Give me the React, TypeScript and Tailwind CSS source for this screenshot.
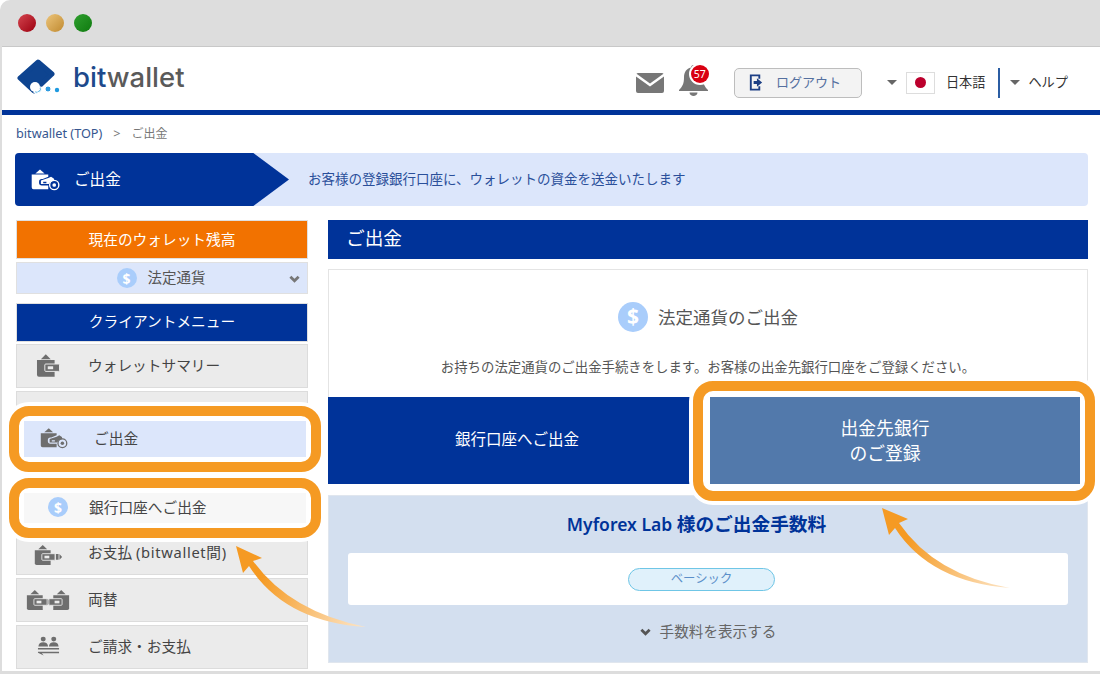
import type { ReactNode } from "react";

const FONT = "font-['Noto_Sans','Noto_Sans_CJK_JP',sans-serif]";

function Coin({ className }: { className: string }) {
  return (
    <span
      className={`inline-flex shrink-0 items-center justify-center rounded-full bg-[#a9cdfb] font-bold text-white ${className}`}
    >
      $
    </span>
  );
}

function Caret() {
  return (
    <span className="block h-0 w-0 border-x-[5px] border-t-[5px] border-x-transparent border-t-[#666]" />
  );
}

function Chevron({ className }: { className: string }) {
  return (
    <svg viewBox="0 0 12 8" className={className} fill="none" stroke="currentColor" strokeWidth="3">
      <path d="M1.500 1.500 6 6l4.500-4.500" />
    </svg>
  );
}

// solid wallet with a clasp band that sticks out to the right
function WalletShape({ x = 0 }: { x?: number }) {
  return (
    <g transform={`translate(${x} 0)`}>
      <path d="M5 6 10 1 15 6Z" />
      <path d="M1 7h18v17H3a2 2 0 0 1-2-2Z" />
      <rect x="9" y="11" width="15" height="7.500" rx="1" stroke="#ebebeb" strokeWidth="1" />
      <rect x="12" y="13.300" width="5.500" height="3" fill="#ebebeb" />
    </g>
  );
}

function WalletIcon() {
  return (
    <svg viewBox="0 0 24.500 25" className="h-[25px] w-[24px] fill-[#6e6e6e]">
      <WalletShape />
    </svg>
  );
}

function WithdrawIcon({ className }: { className: string }) {
  return (
    <svg viewBox="0 0 32 25" className={className}>
      <path d="M5 6 10 1.500 15 6Z" />
      <path d="M1 7h18v2.500L13 12h-1a3 3 0 0 0-3 3v1a3 3 0 0 0 3 3h7v4H3a2 2 0 0 1-2-2Z" />
      <path
        fillRule="evenodd"
        d="M11 13.500 19 11l3-1.500 3 2 .500 2-4 1.500-2 2.500H11Zm2.500 1.500v1.500h3.500V15Z"
      />
      <circle cx="25.500" cy="18.500" r="5" fill="none" stroke="currentColor" strokeWidth="1.500" />
      <circle cx="25.500" cy="18.500" r="2" />
    </svg>
  );
}

function TransferIcon() {
  return (
    <svg viewBox="0 0 32 25" className="h-[22px] w-[32px] fill-[#6e6e6e]">
      <WalletShape />
      <path d="M25 11.500h3v6.500h-3Zm4 0 3 3.200-3 3.300Z" />
    </svg>
  );
}

function ExchangeIcon() {
  return (
    <svg viewBox="0 0 50 25" className="h-[22px] w-[44px] fill-[#6e6e6e]">
      <WalletShape />
      <path d="M24.500 11l3 3.700-3 3.800Z" />
      <g transform="translate(50 0) scale(-1 1)">
        <WalletShape />
      </g>
    </svg>
  );
}

function BillingIcon() {
  return (
    <svg viewBox="0 0 24 21" className="h-[21px] w-[23px] fill-[#6e6e6e]">
      <circle cx="6.500" cy="2.800" r="2.600" />
      <path d="M1.500 10.500c0-3 2-4.500 5-4.500s5 1.500 5 4.500Z" />
      <circle cx="17.500" cy="2.800" r="2.600" />
      <path d="M12.500 10.500c0-3 2-4.500 5-4.500s5 1.500 5 4.500Z" />
      <path d="M1 12h22v1.500H1Zm0 4h22v1.500H5l2 2.500-6-3Z" />
    </svg>
  );
}

function MenuRow({ icon, children }: { icon: ReactNode; children: ReactNode }) {
  return (
    <div className="mb-[3px] flex h-[44px] items-center border border-[#dcdcdc] bg-[#ebebeb] pb-[1px] text-[14.7px] text-[#444]">
      <div className="flex w-[62px] justify-center">{icon}</div>
      <div className="pl-[9px]">{children}</div>
    </div>
  );
}

function Highlight({ className, children }: { className: string; children: ReactNode }) {
  return (
    <div
      className={`relative z-10 rounded-[20px] border-10 border-[#f59a23] bg-white ring-4 ring-white ${className}`}
    >
      {children}
    </div>
  );
}

function Sidebar() {
  return (
    <aside className="w-[292px] shrink-0">
      <div className="flex h-[39px] items-center justify-center border border-[#e0e0e0] bg-[#f27200] text-[14.7px] text-white">
        現在のウォレット残高
      </div>
      <div className="relative mt-[3px] flex h-[32px] items-center justify-center gap-[11px] border border-[#e0e0e0] bg-[#dce6fb] pr-[2px] text-[14.5px] text-[#555]">
        <Coin className="h-[20px] w-[20px] text-[14px]" />
        法定通貨
        <Chevron className="absolute right-[7px] top-[12px] h-[8px] w-[11px] text-[#777]" />
      </div>
      <div className="mt-[9px] flex h-[39px] items-center justify-center border border-[#e0e0e0] bg-[#003399] pb-[2px] text-[14.7px] text-white">
        クライアントメニュー
      </div>
      <div className="mt-[2px]">
        <MenuRow icon={<WalletIcon />}>ウォレットサマリー</MenuRow>
      </div>
      <div className="h-[15px] border border-b-0 border-[#dcdcdc] bg-[#ebebeb]" />
      <Highlight className="-mx-[7px] h-[66px] w-[312px] p-[5px]">
        <div className="flex h-[36px] items-center bg-[#dce6fb] pb-[2px] text-[14.7px] text-[#444]">
          <WithdrawIcon className="ml-[15px] h-[22px] w-[30px] fill-[#6e6e6e] text-[#6e6e6e]" />
          <span className="ml-[25px]">ご出金</span>
        </div>
      </Highlight>
      <Highlight className="-mx-[7px] mt-[6px] h-[60px] w-[312px] p-[5px]">
        <div className="flex h-[30px] items-center bg-[#f7f7f7] pb-[2px] text-[14.7px] text-[#444]">
          <Coin className="ml-[24px] h-[20px] w-[20px] text-[14px]" />
          <span className="ml-[21px]">銀行口座へご出金</span>
        </div>
      </Highlight>
      <div className="flex h-[37px] items-start border border-t-0 border-[#dcdcdc] bg-[#ebebeb] pt-[3px] text-[14.7px] text-[#444]">
        <div className="flex w-[62px] justify-center pt-[3px]">
          <TransferIcon />
        </div>
        <div className="pl-[9px]">
          お支払 <span className="tracking-[0.7px]">(bitwallet間)</span>
        </div>
      </div>
      <div className="mt-[3px]">
        <MenuRow icon={<ExchangeIcon />}>両替</MenuRow>
        <MenuRow icon={<BillingIcon />}>ご請求・お支払</MenuRow>
      </div>
    </aside>
  );
}

function MainPanel() {
  return (
    <main className="min-w-0 flex-1">
      <div className="flex h-[39px] items-center bg-[#003399] pb-[2px] pl-[18px] text-[18.7px] text-white">
        ご出金
      </div>
      <section className="mt-[10px] h-[128px] border-x border-t border-[#e4e4e4] bg-white">
        <div className="flex items-center justify-center gap-[10px] pt-[32px]">
          <Coin className="h-[30px] w-[30px] text-[21px]" />
          <span className="text-[17.5px] text-[#555]">法定通貨のご出金</span>
        </div>
        <p className="mt-[25px] text-center text-[13.4px] leading-[20px] text-[#555]">
          お持ちの法定通貨のご出金手続きをします。お客様の出金先銀行口座をご登録ください。
        </p>
      </section>
      <div className="flex h-[87px]">
        <button className="h-[87px] w-[362px] shrink-0 bg-[#003399] pb-[2px] pl-[16px] text-[15.5px] text-white">
          銀行口座へご出金
        </button>
        <Highlight className="ml-[3px] -mt-[16px] h-[120px] w-[402px] shrink-0 pb-[7px] pl-[7px] pr-[5px] pt-[6px]">
          <button className="h-[87px] w-[370px] bg-[#5279ab] pr-[20px] text-[17.8px] leading-[25px] text-white">
            出金先銀行
            <br />
            のご登録
          </button>
        </Highlight>
      </div>
      <section className="mt-[11px] h-[168px] border border-[#e0e6ee] bg-[#d3dfef] px-[19px]">
        <h2 className="pr-[23px] pt-[14px] text-center text-[17.5px] font-semibold leading-[28px] text-[#003399]">
          Myforex Lab <span className="text-[18.7px] font-bold">様のご出金手数料</span>
        </h2>
        <div className="mt-[15px] flex h-[52px] items-center justify-center rounded-[3px] bg-white">
          <span className="mr-[13px] flex h-[23px] w-[147px] items-center justify-center rounded-full border border-[#6fc6e6] bg-[#e0f1fb] text-[12.4px] text-[#5b8fc9]">
            ベーシック
          </span>
        </div>
        <div className="mt-[16px] flex items-center justify-center gap-[9px] text-[14.6px] text-[#666]">
          <Chevron className="h-[8px] w-[11px] text-[#555]" />
          手数料を表示する
        </div>
      </section>
    </main>
  );
}

export default function App() {
  return (
    <div className={`relative h-[674px] w-[1100px] overflow-hidden bg-white ${FONT}`}>
      <div className="flex h-full flex-col rounded-tl-[10px] bg-[#dddddd] pb-[3px] pl-[2px]">
        <div className="flex h-[46px] shrink-0 items-center gap-[10px] pl-[16px]">
          <span className="h-[18px] w-[18px] rounded-full bg-[linear-gradient(135deg,#d4454f,#9c0010)]" />
          <span className="h-[18px] w-[18px] rounded-full bg-[linear-gradient(135deg,#ecc47a,#c08a30)]" />
          <span className="h-[18px] w-[18px] rounded-full bg-[linear-gradient(135deg,#2f9f2f,#0f7a0f)]" />
        </div>
        <div className="min-h-0 flex-1 border-t border-[#c8c8c8] bg-white">
          <header className="box-content flex h-[63px] items-center border-b-[5px] border-[#003399]">
            <svg viewBox="0 0 44 36" className="mb-[3px] ml-[15px] h-[36px] w-[44px]">
              <path
                d="M3 19 21 3 35 15 17 32Z"
                fill="#0e4490"
                stroke="#0e4490"
                strokeWidth="5"
                strokeLinejoin="round"
              />
              <circle cx="18" cy="28" r="5" fill="#fff" />
              <path d="M24.500 28a5 5 0 0 1-8 5l2-1a3 3 0 0 0 4-4Z" fill="#5cb8ea" stroke="#fff" strokeWidth="1" />
              <circle cx="31" cy="30" r="3" fill="#2f9be0" stroke="#fff" strokeWidth="1" />
              <circle cx="40" cy="31" r="2.200" fill="#1f9ae0" />
            </svg>
            <div className="mb-[1px] ml-[12px] font-['Inter',sans-serif] text-[27.5px] font-medium leading-none">
              <span className="text-[#1d4a8c]">bit</span>
              <span className="text-[#5a5a5a]">wallet</span>
            </div>
            <div className="ml-auto mt-[8px] flex items-center text-[13.2px] text-[#333]">
              <svg viewBox="0 0 28 20" className="h-[20px] w-[28px]">
                <path
                  d="M2 0h24a2 2 0 0 1 1.500.700L14 10.500.500.700A2 2 0 0 1 2 0Z"
                  fill="#777"
                />
                <path
                  d="M0 3.500 14 13.500 28 3.500V18a2 2 0 0 1-2 2H2a2 2 0 0 1-2-2Z"
                  fill="#777"
                />
              </svg>
              <div className="relative -mt-[4px] ml-[15px] h-[31px] w-[29px]">
                <svg viewBox="0 0 29 31" className="h-[31px] w-[29px]">
                  <path
                    d="M14.500 0c1.500 0 2.500 1 2.500 2.500 4.500 1 7 4.500 7 10 0 6 1.500 9 5 12.500v1H0v-1c3.500-3.500 5-6.500 5-12.500 0-5.500 2.500-9 7-10C12 1 13 0 14.500 0ZM10.500 27.500h8c0 2-2 3.500-4 3.500s-4-1.500-4-3.500Z"
                    fill="#777"
                  />
                </svg>
                <span className="absolute -right-[1px] top-0 flex h-[18px] w-[18px] items-center justify-center rounded-full bg-[#d90012] text-[10.500px] leading-none text-white ring-2 ring-white">
                  57
                </span>
              </div>
              <button className="ml-[26px] flex h-[30px] w-[128px] items-center rounded-[5px] border border-[#bdbdbd] bg-[#f3f3f3] pl-[14px] text-[13px] text-[#5570a0]">
                <svg viewBox="0 0 14 18" className="h-[17px] w-[14px]">
                  <path
                    d="M10.500 5V1.500H1.500v15h9V13"
                    fill="none"
                    stroke="#1c3f85"
                    strokeWidth="2"
                  />
                  <path d="M4.500 7.500H8V4.500L13.500 9 8 13.500v-3H4.500Z" fill="#1c3f85" />
                </svg>
                <span className="ml-[13px]">ログアウト</span>
              </button>
              <span className="ml-[25px]">
                <Caret />
              </span>
              <span className="ml-[9px] flex h-[22px] w-[29px] items-center justify-center border border-[#ddd] bg-white">
                <span className="h-[11px] w-[11px] rounded-full bg-[#bc002d]" />
              </span>
              <span className="ml-[11px]">日本語</span>
              <span className="ml-[13px] h-[30px] w-[2px] bg-[#2b5da3]" />
              <span className="ml-[10px]">
                <Caret />
              </span>
              <span className="ml-[8px] mr-[32px]">ヘルプ</span>
            </div>
          </header>
          <div className="flex h-[38px] items-center gap-[11px] pl-[14px] text-[12.7px]">
            <span className="text-[#36568f]">bitwallet (TOP)</span>
            <span className="text-[#777]">&gt;</span>
            <span className="text-[12px] text-[#777]">ご出金</span>
          </div>
          <div className="ml-[13px] mr-[12px] flex h-[53px] items-center rounded-[4px] bg-[#dce6fb]">
            <div className="flex h-full w-[274px] items-center rounded-l-[4px] bg-[#003399] pl-[15px] text-[15.6px] text-white [clip-path:polygon(0_0,87%_0,100%_50%,87%_100%,0_100%)]">
              <WithdrawIcon className="h-[23px] w-[31px] fill-white text-white" />
              <span className="ml-[13px]">ご出金</span>
            </div>
            <p className="ml-[19px] text-[13.5px] text-[#2a4f9a]">
              お客様の登録銀行口座に、ウォレットの資金を送金いたします
            </p>
          </div>
          <div className="mt-[14px] flex gap-[20px] pl-[14px] pr-[12px]">
            <Sidebar />
            <MainPanel />
          </div>
        </div>
      </div>
      <svg viewBox="0 0 1100 674" className="pointer-events-none absolute inset-0 z-20 h-[674px] w-[1100px]">
        <defs>
          <linearGradient id="arrowLeft" gradientUnits="userSpaceOnUse" x1="262" y1="575" x2="366" y2="627">
            <stop offset="0" stopColor="#f59a23" />
            <stop offset="1" stopColor="#fde6c8" />
          </linearGradient>
          <linearGradient id="arrowRight" gradientUnits="userSpaceOnUse" x1="908" y1="538" x2="1010" y2="588">
            <stop offset="0" stopColor="#f59a23" />
            <stop offset="1" stopColor="#fde6c8" />
          </linearGradient>
        </defs>
        <path d="M236 546 262 558 253 561Q290 612 366 627 285 622 249 566L243 573Z" fill="url(#arrowLeft)" />
        <path d="M882 508 908 519 899 523Q935 575 1010 588 930 582 895 528L889 535Z" fill="url(#arrowRight)" />
      </svg>
    </div>
  );
}
